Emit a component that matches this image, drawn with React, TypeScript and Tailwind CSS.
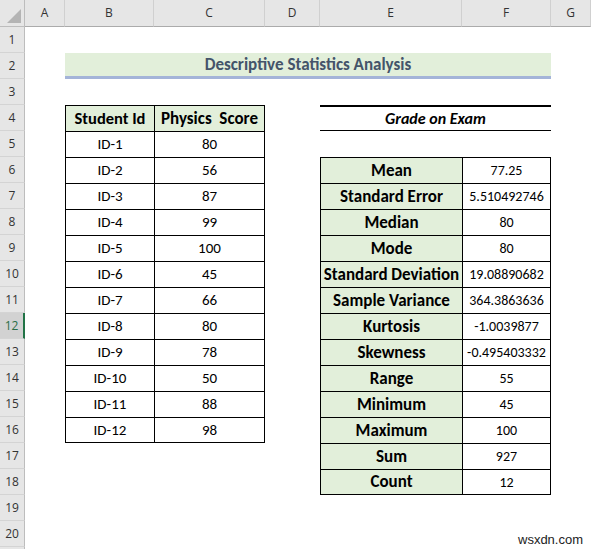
import React from "react";

const students: [string, string][] = [
  ["ID-1", "80"],
  ["ID-2", "56"],
  ["ID-3", "87"],
  ["ID-4", "99"],
  ["ID-5", "100"],
  ["ID-6", "45"],
  ["ID-7", "66"],
  ["ID-8", "80"],
  ["ID-9", "78"],
  ["ID-10", "50"],
  ["ID-11", "88"],
  ["ID-12", "98"],
];

const stats: [string, string][] = [
  ["Mean", "77.25"],
  ["Standard Error", "5.510492746"],
  ["Median", "80"],
  ["Mode", "80"],
  ["Standard Deviation", "19.08890682"],
  ["Sample Variance", "364.3863636"],
  ["Kurtosis", "-1.0039877"],
  ["Skewness", "-0.495403332"],
  ["Range", "55"],
  ["Minimum", "45"],
  ["Maximum", "100"],
  ["Sum", "927"],
  ["Count", "12"],
];

function RowHeader({ n }: { n: number }) {
  const selected = n === 12;
  return (
    <div
      className={
        "flex items-center justify-center border-b border-[#d4d4d4] text-[12px] font-['Open_Sans',sans-serif] " +
        (selected
          ? "bg-[#d2d2d2] text-[#2c6e47] border-r-2 border-r-[#217346]"
          : "bg-[#e6e6e6] text-[#333] border-r border-r-[#bdbdbd]")
      }
    >
      {n}
    </div>
  );
}

function Empty() {
  return <div />;
}

const colHeaders = ["A", "B", "C", "D", "E", "F", "G"];

export default function App() {
  const rows: React.ReactNode[] = [];
  for (let r = 1; r <= 20; r++) {
    const cells: React.ReactNode[] = [];
    cells.push(<RowHeader key="h" n={r} />);
    cells.push(<Empty key="A" />);
    if (r === 2) {
      cells.push(
        <div
          key="title"
          className="col-span-5 flex items-center justify-center bg-[#e2efda] border-b-[3px] border-[#a4b4d8] text-[17px] font-bold text-[#44546a]"
        >
          Descriptive Statistics Analysis
        </div>
      );
      cells.push(<Empty key="G" />);
    } else {
      if (r === 4) {
        cells.push(
          <div
            key="B"
            className="flex items-center justify-center bg-[#e2efda] border-t border-l border-black text-[16.5px] font-bold text-black"
          >
            Student Id
          </div>
        );
        cells.push(
          <div
            key="C"
            className="flex items-center justify-center bg-[#e2efda] border-t border-l border-r border-black text-[17px] font-bold text-black whitespace-pre"
          >
            {"Physics  Score"}
          </div>
        );
      } else if (r >= 5 && r <= 16) {
        const s = students[r - 5];
        const last = r === 16;
        cells.push(
          <div
            key="B"
            className={
              "flex items-center justify-center border-t border-l border-black text-[15px] text-black" +
              (last ? " border-b" : "")
            }
          >
            {s[0]}
          </div>
        );
        cells.push(
          <div
            key="C"
            className={
              "flex items-center justify-center border-t border-l border-r border-black text-[15px] text-black" +
              (last ? " border-b" : "")
            }
          >
            {s[1]}
          </div>
        );
      } else {
        cells.push(<Empty key="B" />);
        cells.push(<Empty key="C" />);
      }
      cells.push(<Empty key="D" />);
      if (r === 4) {
        cells.push(
          <div
            key="EF"
            className="col-span-2 flex items-center justify-center border-t-2 border-b border-black text-[16px] font-bold italic text-black"
          >
            Grade on Exam
          </div>
        );
      } else if (r >= 6 && r <= 18) {
        const s = stats[r - 6];
        const last = r === 18;
        cells.push(
          <div
            key="E"
            className={
              "flex items-center justify-center bg-[#e2efda] border-t border-l border-black text-[17px] font-bold text-black whitespace-nowrap" +
              (last ? " border-b" : "")
            }
          >
            {s[0]}
          </div>
        );
        cells.push(
          <div
            key="F"
            className={
              "flex items-center justify-center border-t border-l border-r border-black text-[14px] text-black whitespace-nowrap" +
              (last ? " border-b" : "")
            }
          >
            {s[1]}
          </div>
        );
      } else {
        cells.push(<Empty key="E" />);
        cells.push(<Empty key="F" />);
      }
      cells.push(<Empty key="G" />);
    }
    rows.push(<React.Fragment key={r}>{cells}</React.Fragment>);
  }

  return (
    <div className="relative w-[591px] h-[549px] overflow-hidden bg-white font-[Carlito,Lato,sans-serif]">
      <div className="grid grid-cols-[25px_40px_89px_111px_55px_142px_89px_1fr] grid-rows-[27px_repeat(21,26px)]">
        <div className="relative bg-[#e6e6e6] border-r border-b border-[#bdbdbd]">
          <svg className="absolute right-[3px] bottom-[3px]" width="14" height="14" viewBox="0 0 14 14">
            <polygon points="14,0 14,14 0,14" fill="#b4b4b4" />
          </svg>
        </div>
        {colHeaders.map((c) => (
          <div
            key={c}
            className="flex items-center justify-center bg-[#e6e6e6] border-r border-b border-r-[#d0d0d0] border-b-[#ababab] text-[12px] text-[#333] font-['Open_Sans',sans-serif]"
          >
            {c}
          </div>
        ))}
        {rows}
        <div className="bg-[#e6e6e6] border-r border-[#bdbdbd]" />
      </div>
      <div className="absolute left-[518px] top-[533px] text-[13px] leading-none text-[#222] font-['Liberation_Sans',Arial,sans-serif]">
        wsxdn.com
      </div>
    </div>
  );
}
